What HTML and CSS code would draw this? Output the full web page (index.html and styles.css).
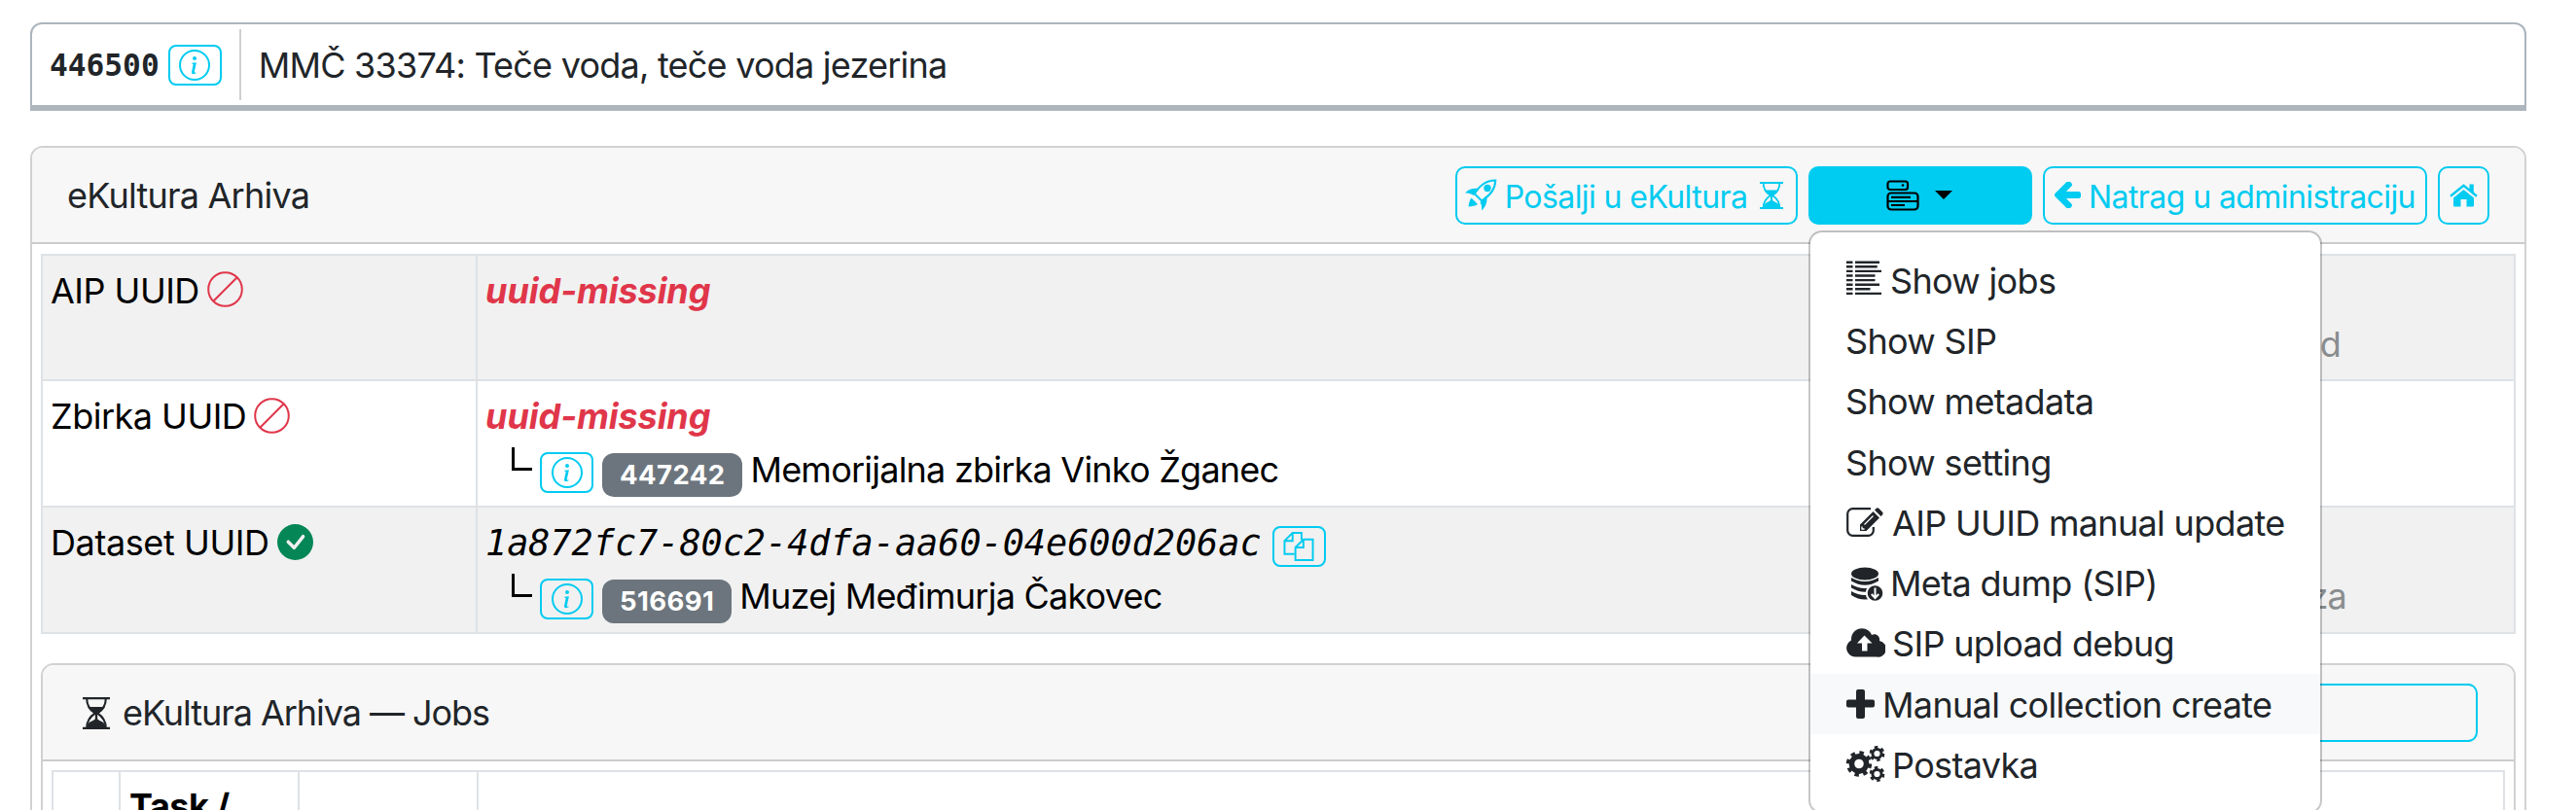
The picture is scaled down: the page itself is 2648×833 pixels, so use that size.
FILE: index.html
```
<!DOCTYPE html>
<html lang="hr">
<head>
  <meta charset="UTF-8" />
  <meta name="viewport" content="width=device-width, initial-scale=1.0"/>
  <title>eKultura Arhiva</title>
  <link rel="stylesheet" href="styles.css">
</head>
<body>
  <!-- shared icons -->
  <svg class="sprite">
    <symbol id="info" viewBox="0 0 16 16">
      <path d="M8 15A7 7 0 1 1 8 1a7 7 0 0 1 0 14m0 1A8 8 0 1 0 8 0a8 8 0 0 0 0 16"/>
      <path d="m8.93 6.588-2.29.287-.082.38.45.083c.294.07.352.176.288.469l-.738 3.468c-.194.897.105 1.319.808 1.319.545 0 1.178-.252 1.465-.598l.088-.416c-.2.176-.492.246-.686.246-.275 0-.375-.193-.304-.533zM9 4.5a1 1 0 1 1-2 0 1 1 0 0 1 2 0"/>
    </symbol>
    <symbol id="ban" viewBox="0 0 37 37">
      <g fill="none" stroke="currentColor" stroke-width="2">
        <circle cx="18.5" cy="18.5" r="17.3"/>
        <path d="M6.3 30.7 30.7 6.3"/>
      </g>
    </symbol>
    <symbol id="hourglass" viewBox="0 0 24 28">
      <path d="M0 0h24v2H0zM0 26h24v2H0z"/>
      <path d="M3.600 1C3.600 8 7 11.500 11 14 7 16.500 3.600 20 3.600 27M20.400 1C20.400 8 17 11.500 13 14c4 2.500 7.400 6 7.400 13" fill="none" stroke="currentColor" stroke-width="1.800"/>
      <path d="M4.500 8.500h15C18 11.500 15.500 13 13 14.500V19c1.500 1.500 5 2 6.500 4.500l.5 3H4l.5-3C6 21 9.500 20.500 11 19v-4.500C8.500 13 6 11.500 4.500 8.500z"/>
    </symbol>
    <symbol id="gear-small" viewBox="-8 -8 16 16">
      <circle r="4.600" fill="none" stroke="currentColor" stroke-width="3"/>
      <circle r="6.500" fill="none" stroke="currentColor" stroke-width="3" stroke-dasharray="3.403"/>
    </symbol>
  </svg>

  <div class="page">
    <div class="title-bar">
      <code class="item-id">446500</code>
      <button class="btn-info"><svg><use href="#info"/></svg></button>
      <div class="item-title">MMČ 33374: Teče voda, teče voda jezerina</div>
    </div>

    <div class="card">
      <div class="card-header">
        <span class="card-title">eKultura Arhiva</span>
        <div class="actions">
          <button class="btn btn-send">
            <svg width="33" height="33" viewBox="0 0 33 33">
              <path d="M31.300 1.400C22 1.200 15 6.500 9.800 15.300l7 7C25.500 17.500 31 10.500 31.300 1.400z" fill="none" stroke="currentColor" stroke-width="2"/>
              <circle cx="23" cy="9.500" r="3.700"/>
              <path d="M0 14.500C4 10.500 8 9.300 14.500 10L9 17C6 15 3 14.500 0 14.500zM17 32.500c4.500-4 6-8 5.300-14.500L15.500 24c1.500 2.500 2 5.500 1.500 8.500zM6.500 19.500 13 26c-2 2-6 2-9.500 2.500.5-3.500 1-6.500 3-9z"/>
            </svg>
            <span>Pošalji u eKultura</span>
            <svg class="icon-wait" width="24" height="28"><use href="#hourglass"/></svg>
          </button>
          <div class="dropdown">
            <button class="btn btn-menu">
              <svg class="line-icon" width="34" height="32" viewBox="0 0 34 32" stroke-width="2.200">
                <rect x="1.500" y="1.500" width="20.500" height="8.500" rx="2.500"/>
                <rect x="1.500" y="13.500" width="31" height="17" rx="3.500"/>
                <path d="M1.500 22h31M5 17.800h20M5 26h14"/>
                <circle cx="17" cy="5.500" r="1.300" fill="#000" stroke="none"/>
              </svg>
              <i class="caret"></i>
            </button>
            <ul class="menu">
              <li>
                <svg width="39" height="36" viewBox="-1 0 39 36" class="icon-list">
                  <path d="M0 1.700h6.500M0 6.300h6.500M0 10.900h6.500M0 15.500h6.500M0 20.100h6.500M0 24.700h6.500M0 29.300h6.500M0 33.900h6.500M9 1.700h25M9 6.300h22.700M9 10.900h27M9 15.500h20.500M9 20.100h20.500M9 24.700h25M9 29.300h15.500M9 33.900h27" stroke="currentColor" stroke-width="2.400"/>
                </svg>
                <span>Show jobs</span>
              </li>
              <li><span>Show SIP</span></li>
              <li><span>Show metadata</span></li>
              <li><span>Show setting</span></li>
              <li>
                <svg width="41" height="32" viewBox="-1 -1 41 32">
                  <path d="M25 1.200H6.500A5.300 5.300 0 0 0 1.200 6.500v17a5.300 5.300 0 0 0 5.300 5.300h16a5.300 5.300 0 0 0 5.300-5.300V20" fill="none" stroke="currentColor" stroke-width="2.200"/>
                  <path d="M27.500 4 34 10.500 20.500 24H14v-6.500zM29 2.500 30.500 1q1.500-1.500 3 0L37 4.500q1.500 1.500 0 3L35.500 9z"/>
                  <path d="M18.500 17.500 27.500 8.500M16 19.500v2.500h2.500" stroke="#fff" stroke-width="1.300" fill="none"/>
                </svg>
                <span>AIP UUID manual update</span>
              </li>
              <li>
                <svg width="39" height="36" viewBox="-6 0 39 36" class="icon-db">
                  <ellipse cx="14" cy="7" rx="14" ry="6.500"/>
                  <path d="M0 11q14 8 28 0v3.500q-14 8.500-28 0zM0 18q14 8 28 0v3.500q-14 8.500-28 0zM0 25q14 8 28 0v4q-14 9-28 0z"/>
                  <circle cx="24.500" cy="27" r="8.800" stroke="#fff" stroke-width="2"/>
                  <path d="M24.500 21.500v10M20.800 28l3.700 4 3.700-4" stroke="#fff" stroke-width="2" fill="none"/>
                </svg>
                <span>Meta dump (SIP)</span>
              </li>
              <li>
                <svg width="41" height="30" viewBox="-1 0 41 30">
                  <path fill-rule="evenodd" d="M9 29.500A9 9 0 0 1 5 12.500C4.500 5 10 .3 16 .3c5 0 8.500 3 10 6.700 4-2.500 9 1 8 6A8.300 8.300 0 0 1 31 29.500zM18.500 7.500 11 15.500h5v8h5.500v-8h5z"/>
                </svg>
                <span>SIP upload debug</span>
              </li>
              <li class="active">
                <svg width="31" height="30" viewBox="-1 0 31 30">
                  <path d="M12 0h5q2 0 2 2v8.500h8q2 0 2 2v4q0 2-2 2h-8V28q0 2-2 2h-5q-2 0-2-2v-9.500H2q-2 0-2-2v-4q0-2 2-2h8V2q0-2 2-2z"/>
                </svg>
                <span>Manual collection create</span>
              </li>
              <li>
                <svg width="41" height="38" viewBox="-1 0 41 38">
                  <circle cx="13" cy="18.500" r="7.600" fill="none" stroke="currentColor" stroke-width="5.600"/>
                  <circle cx="13" cy="18.500" r="11.300" fill="none" stroke="currentColor" stroke-width="3.800" stroke-dasharray="4.437"/>
                  <use href="#gear-small" x="23.500" y="0" width="16" height="16"/>
                  <use href="#gear-small" x="23.500" y="21" width="16" height="16"/>
                </svg>
                <span>Postavka</span>
              </li>
            </ul>
          </div>
          <button class="btn btn-back">
            <svg width="27" height="27" viewBox="64 0 1472 1408">
              <path d="M1536 640v128q0 53-32.500 90.500t-84.500 37.500h-704l293 294q38 36 38 90t-38 90l-75 76q-37 37-90 37-52 0-91-37l-651-652q-37-37-37-90 0-52 37-91l651-650q38-38 91-38 52 0 90 38l75 74q38 38 38 91t-38 91l-293 293h704q52 0 84.500 37.500t32.500 90.500z"/>
            </svg>
            <span>Natrag u administraciju</span>
          </button>
          <button class="btn btn-home">
            <svg width="29" height="24" viewBox="0 0 29 24">
              <path d="M14.500 6 25 14.500v8q0 1-1 1h-6.500V16h-6v7.500H5q-1 0-1-1v-8z"/>
              <path d="M1 12.800 14.500 1.800 28 12.800" fill="none" stroke="currentColor" stroke-width="2.400"/>
              <path d="M20.500.5h4.300v9l-4.300-3.500z"/>
            </svg>
          </button>
        </div>
      </div>

      <div class="card-body">
        <div class="uuid-table">
          <div class="row first">
            <div class="name">AIP UUID <svg class="state missing"><use href="#ban"/></svg></div>
            <div class="value">
              <div class="line"><em class="uuid-missing">uuid-missing</em></div>
              <div class="line"><span class="note note-d">d</span></div>
            </div>
          </div>
          <div class="row">
            <div class="name">Zbirka UUID <svg class="state missing"><use href="#ban"/></svg></div>
            <div class="value">
              <div class="line"><em class="uuid-missing">uuid-missing</em></div>
              <div class="line">
                <i class="branch"></i>
                <button class="btn-info"><svg><use href="#info"/></svg></button>
                <span class="badge">447242</span>
                <span class="owner">Memorijalna zbirka Vinko Žganec</span>
              </div>
            </div>
          </div>
          <div class="row">
            <div class="name dataset">Dataset UUID
              <svg class="state ok" viewBox="0 0 16 16"><path d="M16 8A8 8 0 1 1 0 8a8 8 0 0 1 16 0m-3.970-3.030a.75.75 0 0 0-1.080.022L7.477 9.417 5.384 7.323a.75.75 0 0 0-1.060 1.060L6.970 11.030a.75.75 0 0 0 1.079-.020l3.992-4.990a.75.75 0 0 0-.010-1.050z"/></svg>
            </div>
            <div class="value">
              <div class="line">
                <code class="uuid">1a872fc7-80c2-4dfa-aa60-04e600d206ac</code>
                <button class="btn-info btn-copy">
                  <svg class="line-icon" viewBox="0 0 33 32" stroke-width="2">
                    <path d="M12 24H1.500V10L10 1.500h9.500V9M10 1.500V10H1.500"/>
                    <path d="M21.500 8.500h10V30.500H13V17zM21.500 8.500V17H13"/>
                  </svg>
                </button>
              </div>
              <div class="line">
                <i class="branch"></i>
                <button class="btn-info"><svg><use href="#info"/></svg></button>
                <span class="badge">516691</span>
                <span class="owner">Muzej Međimurja Čakovec</span>
                <span class="note note-za">za</span>
              </div>
            </div>
          </div>
        </div>

        <div class="card jobs">
          <div class="card-header">
            <span class="card-title jobs-title"><svg width="28" height="33" viewBox="0 0 24 28" preserveAspectRatio="none"><use href="#hourglass" width="24" height="28"/></svg>eKultura Arhiva — Jobs</span>
            <button class="btn btn-jobs"></button>
          </div>
          <div class="card-body">
            <div class="jobs-table">
              <div></div>
              <div>Task /</div>
              <div></div>
              <div></div>
            </div>
          </div>
        </div>
      </div>
    </div>
  </div>
</body>
</html>
```
FILE: styles.css
```
* {
  box-sizing: border-box;
}

html, body {
  height: 100%;
  overflow: hidden;
}

body {
  margin: 0;
  background-color: #fff;
  color: #212529;
  font-family: Inter, "Liberation Sans", sans-serif;
  font-size: 36px;
  line-height: 55px;
  letter-spacing: -0.77px;
}

svg {
  flex: none;
  fill: currentColor;
}

.line-icon {
  fill: none;
  stroke: currentColor;
}

.sprite {
  display: none;
}

.page {
  width: 2566px;
  margin-left: 31px;
  padding-top: 23px;
}

/* title bar */
.title-bar {
  display: flex;
  align-items: center;
  height: 91px;
  padding-left: 18px;
  border: 2px solid #adb5bd;
  border-bottom-width: 6px;
  border-radius: 12px 12px 0 0;
}

.item-id {
  margin-right: 9px;
  font: bold 31.2px/40px "DejaVu Sans Mono", monospace;
  letter-spacing: 0;
}

.item-title {
  height: 73px;
  margin-left: 18px;
  padding: 10px 0 0 18px;
  border-left: 2px solid #ced0d2;
}

.card-title {
  margin-top: 1px;
}

/* buttons */
button {
  display: flex;
  align-items: center;
  justify-content: center;
  flex: none;
  padding: 0;
  border: 2px solid #00cbf0;
  background: none;
  color: #00cbf0;
  font-family: inherit;
}

.btn-info {
  width: 55px;
  height: 42px;
  border-radius: 8px;
}

.btn-info svg {
  width: 32px;
  height: 32px;
}

.btn {
  height: 60px;
  border-radius: 10px;
  font-size: 32px;
  line-height: 40px;
  letter-spacing: -0.58px;
}

.btn span {
  margin-top: 5px;
}

.btn-send {
  width: 352px;
  gap: 8px;
  padding-right: 5px;
}

.icon-wait {
  margin-left: 5px;
}

.btn-menu {
  width: 230px;
  gap: 16px;
  padding-right: 2px;
  background-color: #00cbf0;
  color: #000;
}

.caret {
  border: 9px solid transparent;
  border-top-color: #000;
  border-bottom: 0;
}

.btn-back {
  width: 395px;
  gap: 8px;
}

.btn-home {
  width: 53px;
}

/* dropdown */
.dropdown {
  position: relative;
}

.menu {
  position: absolute;
  top: 66px;
  left: 0;
  z-index: 10;
  width: 528px;
  margin: 0;
  padding: 18px 0;
  list-style: none;
  background-color: #fff;
  background-clip: padding-box;
  border: 2px solid rgba(0, 0, 0, 0.22);
  border-radius: 14px;
}

.menu li {
  display: flex;
  align-items: center;
  gap: 7px;
  height: 62.3px;
  padding-left: 36px;
  letter-spacing: -0.67px;
}

.menu span {
  margin-top: 3px;
}

.menu li.active {
  background-color: #f8f9fa;
}

.icon-list {
  margin-top: -4px;
}

.icon-db {
  margin-top: 4px;
}

/* cards */
.card {
  margin-top: 36px;
  border: 2px solid #d1d1d1;
  border-radius: 13px;
}

.card-header {
  display: flex;
  align-items: center;
  justify-content: space-between;
  height: 99px;
  padding: 0 36px;
  background-color: #f7f7f7;
  border-bottom: 2px solid #cbcbcb;
  border-radius: 11px 11px 0 0;
}

.actions {
  display: flex;
  gap: 11px;
}

.card-body {
  padding: 10px 9px;
}

/* uuid table */
.uuid-table {
  border: 2px solid #dee2e6;
  border-bottom: 0;
  color: #000;
}

.row {
  display: flex;
  height: 130px;
  border-bottom: 2px solid #dee2e6;
}

.row.first {
  height: 129px;
}

.row:nth-child(odd) {
  background-color: #f1f1f1;
}

.name {
  display: flex;
  width: 447px;
  padding: 9px 0 0 8px;
  border-right: 2px solid #dee2e6;
  letter-spacing: -0.5px;
}

.dataset {
  letter-spacing: -0.4px;
}

.state {
  width: 37px;
  height: 37px;
  margin: 8px 0 0 8px;
}

.missing {
  color: #e0364a;
}

.ok {
  color: #058656;
}

.value {
  flex: 1;
  padding: 9px 0 0 8px;
}

.first .name,
.first .value {
  padding-top: 9px;
}

.first .state {
  margin-top: 7px;
}

.line {
  display: flex;
  align-items: center;
  height: 55px;
}

.uuid-missing {
  color: #e0364a;
  font-weight: bold;
  letter-spacing: -0.05px;
}

.uuid {
  font: italic 36.8px/55px "DejaVu Sans Mono", monospace;
  letter-spacing: 0;
}

.branch {
  width: 21px;
  height: 24px;
  margin: 0 8px 23px 27px;
  border-left: 3px solid #000;
  border-bottom: 3px solid #000;
}

.line .btn-info {
  margin-top: 5px;
}

.line .btn-copy {
  margin: 6px 0 0 11px;
}

.badge {
  height: 45px;
  margin: 10px 8px 0 9px;
  padding: 0 18px;
  background-color: #6c757d;
  border-radius: 12px;
  color: #fff;
  font-size: 27.5px;
  font-weight: bold;
  line-height: 44px;
  letter-spacing: 0.4px;
}

.note {
  margin-left: auto;
  color: #8a8d8f;
}

.note-d {
  margin-right: 178px;
}

.note-za {
  margin-right: 172px;
}

/* jobs */
.jobs {
  margin-top: 30px;
}

.jobs .card-header {
  padding: 0 37px 0 41px;
}

.jobs-title {
  display: flex;
  align-items: center;
  gap: 13px;
  letter-spacing: -1.05px;
}

.btn-jobs {
  width: 400px;
}

.jobs .card-body {
  padding-top: 9px;
}

.jobs-table {
  display: grid;
  grid-template-columns: 69px 184px 184px 1fr;
  height: 200px;
  border: 2px solid #dee2e6;
  color: #000;
  font-weight: bold;
  letter-spacing: -0.5px;
}

.jobs-table div {
  padding: 8px 0 0 9px;
  border-right: 2px solid #dee2e6;
}

.jobs-table div:last-child {
  border-right: 0;
}
```
